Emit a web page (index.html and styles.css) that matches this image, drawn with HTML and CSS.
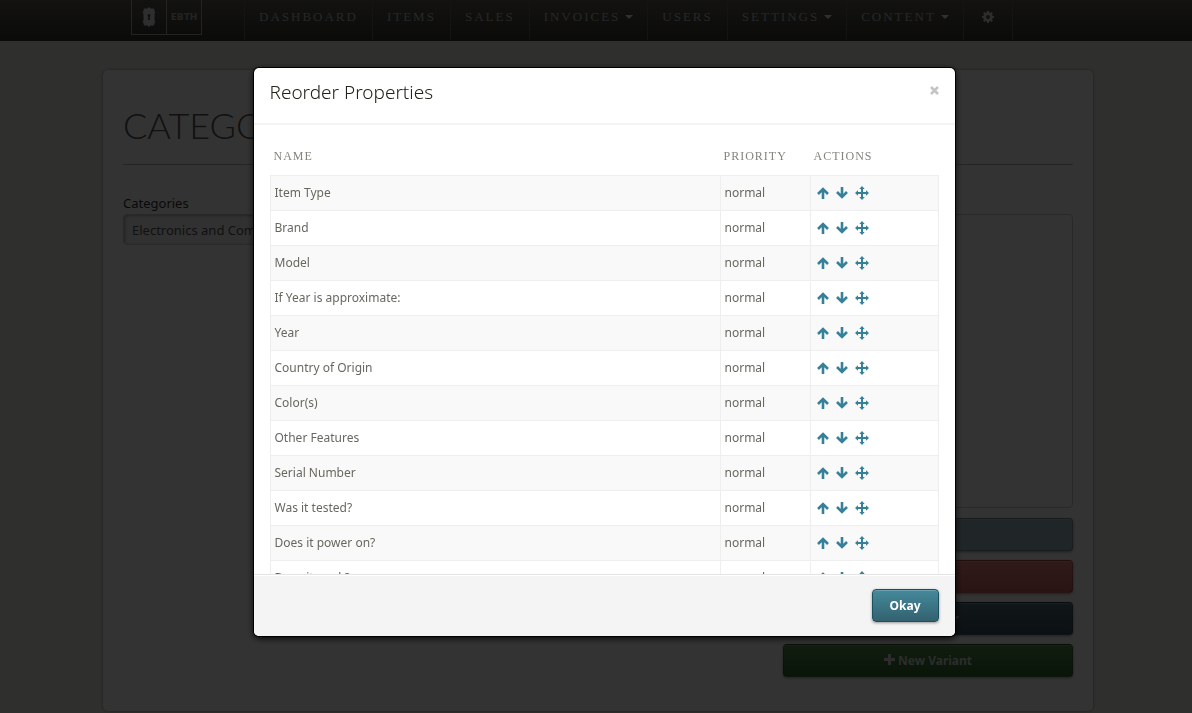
FILE: index.html
```html
<!DOCTYPE html>
<html lang="en">
<head>
<meta charset="utf-8">
<meta name="viewport" content="width=device-width, initial-scale=1">
<title>Reorder Properties</title>
<link rel="stylesheet" href="styles.css">
</head>
<body>
<svg class="sprite" aria-hidden="true">
  <symbol id="up" viewBox="0 0 12 12"><path d="M6 12V2M1 7l5-5 5 5" fill="none" stroke="currentColor" stroke-width="2.600"/></symbol>
  <symbol id="down" viewBox="0 0 12 12"><path d="M6 0v10M1 5l5 5 5-5" fill="none" stroke="currentColor" stroke-width="2.600"/></symbol>
  <symbol id="move" viewBox="0 0 14 14"><path d="M7 0l2.700 3H8v3h3V4.300L14 7l-3 2.700V8H8v3h1.700L7 14l-2.700-3H6V8H3v1.700L0 7l3-2.700V6h3V3H4.300z" fill="currentColor"/></symbol>
  <symbol id="plus" viewBox="0 0 11 11"><path d="M4 0h3v4h4v3H7v4H4V7H0V4h4z" fill="currentColor"/></symbol>
</svg>
<header class="navbar">
  <nav class="navbar-inner" aria-label="Main">
    <a class="brand" href="#" aria-label="EBTH home">
      <span class="brand-mark"><svg width="14" height="20" viewBox="0 0 14 20"><path fill="currentColor" fill-rule="evenodd" d="M7 0l1.500 1.500H12L12.500 4l.8 1-.8 2v6l.8 2-.8 1-.5 2.500H8.500L7 20l-1.500-1.500H2L1.500 16l-.8-1 .8-2V7l-.8-2 .8-1L2 1.500h3.500zM7 7a1.500 1.500 0 0 0-.7 2.800L6 13h2l-.3-3.200A1.500 1.500 0 0 0 7 7z"/></svg></span>
      <span class="brand-name">EBTH</span>
    </a>
    <ul class="menu">
      <li><a href="#">DASHBOARD</a></li>
      <li><a href="#">ITEMS</a></li>
      <li><a href="#">SALES</a></li>
      <li><a href="#">INVOICES<i class="caret"></i></a></li>
      <li><a href="#">USERS</a></li>
      <li><a href="#">SETTINGS<i class="caret"></i></a></li>
      <li><a href="#">CONTENT<i class="caret"></i></a></li>
      <li><a class="gear" href="#" aria-label="Preferences"><svg width="12" height="12" viewBox="0 0 12 12"><path fill="none" stroke="currentColor" stroke-width="2.800" d="M6 2.700a3.300 3.300 0 1 0 0 6.600 3.300 3.300 0 0 0 0-6.600z"/><path stroke="currentColor" stroke-width="2.200" d="M6 0v2M6 10v2M0 6h2M10 6h2M1.800 1.800l1.300 1.300M8.900 8.900l1.300 1.300M1.800 10.200l1.300-1.300M8.900 3.100l1.300-1.300"/></svg></a></li>
    </ul>
  </nav>
</header>
<div class="page">
  <main class="card">
    <h1>CATEGORIES</h1>
    <div class="columns">
      <div class="field">
        <label for="category">Categories</label>
        <select id="category"><option>Electronics and Computers</option></select>
      </div>
      <div class="side">
        <select class="list" size="10" aria-label="Variants"></select>
        <button class="btn slate" type="button">Edit</button>
        <button class="btn red" type="button">Delete</button>
        <button class="btn navy" type="button"><svg width="11" height="11" aria-hidden="true"><use href="#plus"/></svg> Reorder</button>
        <button class="btn green" type="button"><svg width="11" height="11" aria-hidden="true"><use href="#plus"/></svg> New Variant</button>
      </div>
    </div>
  </main>
</div>
<div class="backdrop">
  <section class="modal" role="dialog" aria-modal="true" aria-labelledby="dialog-title">
    <header class="modal-head">
      <h2 id="dialog-title">Reorder Properties</h2>
      <button class="close" type="button" aria-label="Close"><svg width="9" height="9" viewBox="0 0 9 9"><path d="M1 1l7 7M8 1L1 8" stroke="currentColor" stroke-width="2.600"/></svg></button>
    </header>
    <div class="modal-body">
      <table>
        <thead><tr><th class="name">NAME</th><th class="priority">PRIORITY</th><th>ACTIONS</th></tr></thead>
        <tbody id="rows"></tbody>
      </table>
    </div>
    <footer class="modal-foot"><button class="btn okay" type="button">Okay</button></footer>
  </section>
</div>
<script src="rows.js"></script>
</body>
</html>
```
FILE: rows.js
```js
const names = ["Item Type", "Brand", "Model", "If Year is approximate:", "Year", "Country of Origin", "Color(s)", "Other Features", "Serial Number", "Was it tested?", "Does it power on?", "Does it work?"];
const action = (icon, size, label) =>
  `<button type="button" aria-label="${label}"><svg width="${size}" height="${size}"><use href="#${icon}"/></svg></button>`;
document.getElementById("rows").innerHTML = names.map(name =>
  `<tr><td>${name}</td><td>normal</td><td><div class="actions">${action("up", 12, "Move up")}${action("down", 12, "Move down")}${action("move", 14, "Drag")}</div></td></tr>`
).join("");
```
FILE: styles.css
```css
* { box-sizing: border-box; }
body {
  margin: 0;
  min-height: 100vh;
  background: #ebeae0;
  color: #3c3b32;
  font: 13px/20px "Noto Sans", sans-serif;
}
button, select { font: inherit; }
.sprite { position: absolute; width: 0; height: 0; }

.navbar {
  height: 41px;
  background: linear-gradient(#5c5b50, #37362f);
}
.navbar-inner {
  display: flex;
  max-width: 930px;
  height: 40px;
  margin: 0 auto;
}
.brand {
  display: flex;
  width: 71px;
  height: 35px;
  margin-right: 42px;
  border: 1px solid #b0b0b0;
  border-top: 0;
  color: #e6e6e6;
  text-decoration: none;
}
.brand-mark, .brand-name {
  display: flex;
  flex: 1;
  align-items: center;
  justify-content: center;
}
.brand-mark { border-right: 1px solid #b0b0b0; }
.brand-name { color: #b0b0b0; font: bold 9px/12px "DejaVu Sans", sans-serif; }
.menu {
  display: flex;
  margin: 0;
  padding: 0;
  list-style: none;
  border-left: 1px solid #66655a;
}
.menu li { border-right: 1px solid #66655a; }
.menu a {
  display: flex;
  align-items: center;
  height: 34px;
  padding: 0 14px;
  color: #c0c0c0;
  font: 13px/16px "Liberation Serif", serif;
  letter-spacing: 2px;
  text-decoration: none;
}
.menu .gear { padding: 0 18px; color: #e0e0e0; }
.caret {
  margin-left: 5px;
  border: 4px solid transparent;
  border-top-color: #f0f0f0;
  border-bottom: 0;
}

.page { padding: 29px 0 0 4px; }
.card {
  max-width: 990px;
  margin: 0 auto;
  padding: 32px 20px 34px;
  background: #fff;
  border-radius: 5px;
  box-shadow: 0 0 3px rgba(0, 0, 0, .4);
}
h1 {
  margin: 0;
  padding-bottom: 16px;
  border-bottom: 1px solid #bbb;
  color: #555;
  font: 300 36px/46px Lato, sans-serif;
}
.columns {
  display: flex;
  justify-content: space-between;
  padding-top: 28px;
}
.field { display: flex; flex-direction: column; width: 290px; }
.field label { height: 21px; color: #333; }
.field select {
  height: 31px;
  padding: 0 8px;
  appearance: none;
  color: #555;
  background: #f4f4f4;
  border: 1px solid #ccc;
  border-radius: 4px;
  box-shadow: inset 1px 1px 3px rgba(0, 0, 0, .3);
}
.side {
  display: flex;
  flex-direction: column;
  gap: 9px;
  width: 290px;
  padding-top: 21px;
}
.list {
  height: 294px;
  margin-bottom: 1px;
  background: #fff;
  border: 1px solid #ccc;
  border-radius: 4px;
}
.btn {
  height: 33px;
  padding: 0 17px;
  border: 1px solid rgba(0, 0, 0, .2);
  border-radius: 4px;
  color: #fff;
  font-size: 12px;
  font-weight: 700;
  box-shadow: 0 1px 3px rgba(0, 0, 0, .4), inset 0 1px 0 rgba(255, 255, 255, .2);
}
.slate { background: #a1b8c1; }
.red { background: linear-gradient(#f08080, #cb6060); }
.navy { background: linear-gradient(#56707c, #375361); }
.green { background: linear-gradient(#4e8e48, #326b2b); }
.navy, .green { color: #ddd; }

.backdrop {
  position: fixed;
  inset: 0;
  display: flex;
  justify-content: center;
  align-items: flex-start;
  padding: 68px 0 0 16px;
  background: rgba(0, 0, 0, .8);
}
.modal {
  flex: 0 1 701px;
  background: #fff;
  border-radius: 5px;
  box-shadow: 0 0 0 1px #000, 0 2px 7px #000;
}
.modal-head {
  display: flex;
  justify-content: space-between;
  align-items: flex-start;
  padding: 9px 16px 15px;
  border-bottom: 2px solid #f3f3f3;
}
h2 { margin: 0; font: 300 19px/31px "Noto Sans", sans-serif; color: #22211a; }
.close {
  display: flex;
  margin-top: 9px;
  padding: 0;
  border: 0;
  background: none;
  color: #c4c4c4;
}
.modal-body {
  max-height: 449px;
  padding: 11px 16px;
  overflow-y: auto;
  scrollbar-width: none;
}
table {
  width: 100%;
  table-layout: fixed;
  border-collapse: separate;
  border-spacing: 0;
}
th {
  height: 40px;
  padding: 0 4px;
  border-bottom: 1px solid #eee;
  color: #85847d;
  font: 12px/16px "Liberation Serif", serif;
  letter-spacing: 1px;
  text-align: left;
}
.name { width: 450px; }
.priority { width: 90px; }
td {
  height: 35px;
  padding: 0 4px;
  border-left: 1px solid #eee;
  border-bottom: 1px solid #eee;
  color: #68675f;
  font-size: 12px;
}
td:last-child { border-right: 1px solid #eee; }
tbody tr:nth-child(odd) { background: #f9f9f9; }
.actions { display: flex; align-items: center; gap: 7px; padding-left: 2px; }
.actions button {
  display: flex;
  padding: 0;
  border: 0;
  background: none;
  color: #37809a;
}
.modal-foot {
  display: flex;
  justify-content: flex-end;
  padding: 14px 16px;
  background: #f4f4f4;
  border-top: 1px solid #e4e4e4;
  border-radius: 0 0 5px 5px;
  box-shadow: inset 0 1px 0 #fff;
}
.okay {
  border-color: #1c4f60;
  background: linear-gradient(#458a9c, #33616f);
}
```
